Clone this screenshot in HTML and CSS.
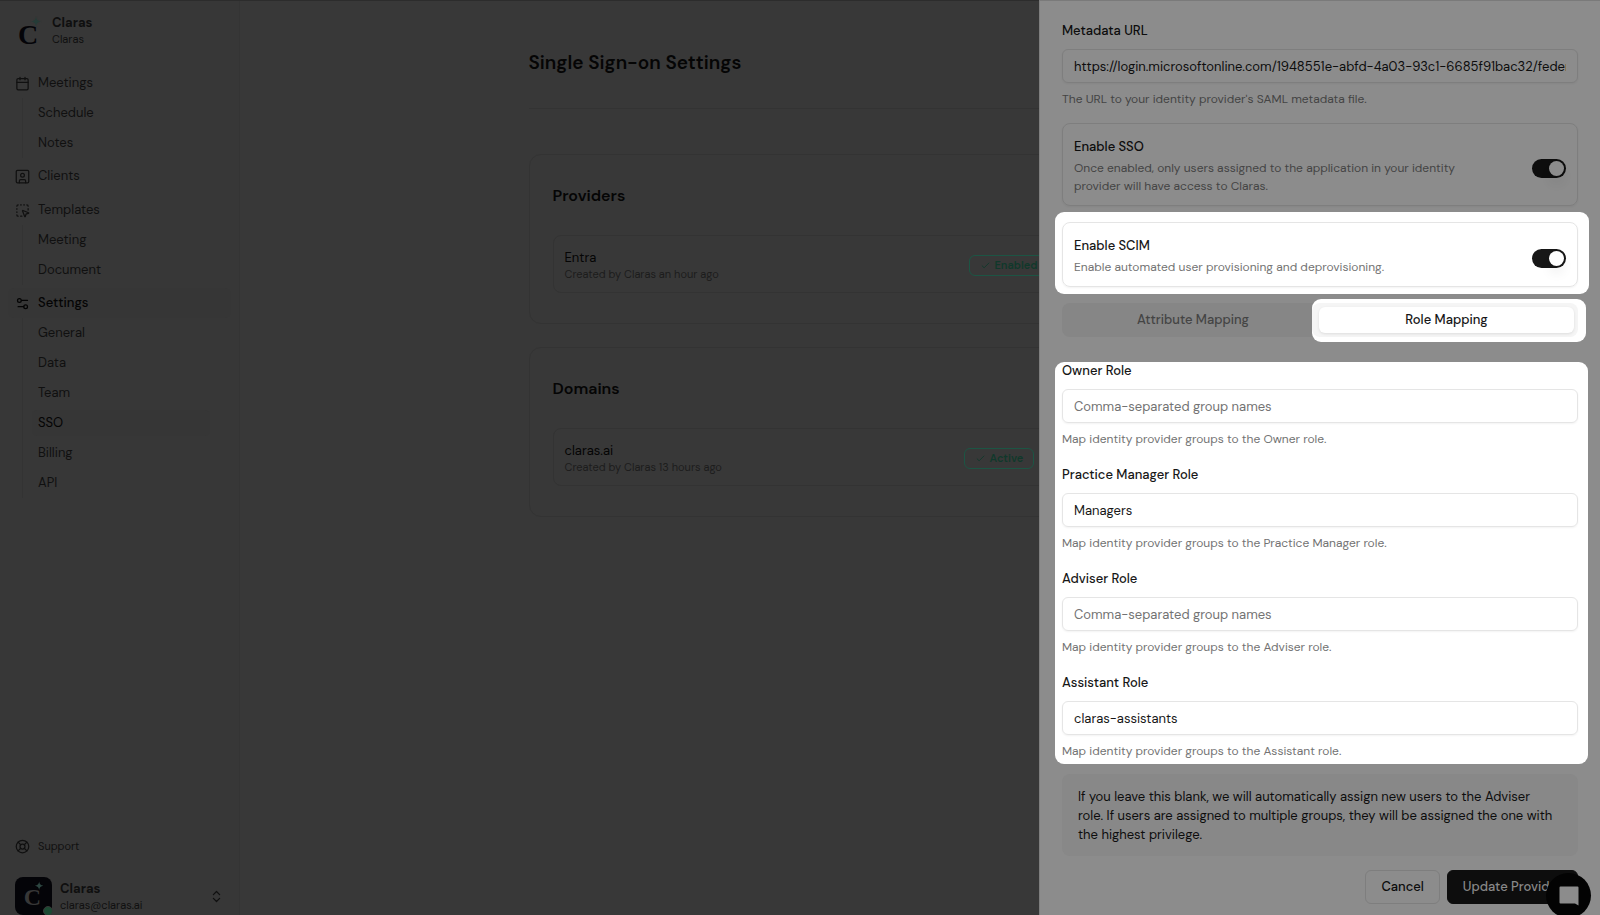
FILE: index.html
```html
<!DOCTYPE html>
<html lang="en">
<head>
    <meta charset="UTF-8">
    <meta name="viewport" content="width=device-width, initial-scale=1.0">
    <title>Claras - Single Sign-on Settings</title>
    <link rel="stylesheet" href="styles.css">
</head>
<body>
    <div class="app">
        <!-- Sidebar -->
        <aside class="sidebar">
            <div class="brand">
                <svg class="brand-logo" viewBox="0 0 28 36" aria-hidden="true">
                    <text x="2" y="28" class="logo-letter">C</text>
                    <path class="logo-star" d="M20 0.500Q20.500 5 25 5.500Q20.500 6 20 10.500Q19.500 6 15 5.500Q19.500 5 20 0.500Z"/>
                </svg>
                <div>
                    <div class="brand-name">Claras</div>
                    <div class="brand-sub">Claras</div>
                </div>
            </div>

            <nav class="nav">
                <a class="nav-item" href="#">
                    <svg class="icon" viewBox="0 0 24 24"><path d="M8 2v4M16 2v4M3 10h18"/><rect x="3" y="4" width="18" height="18" rx="2"/></svg>
                    Meetings
                </a>
                <div class="nav-sub">
                    <a href="#">Schedule</a>
                    <a href="#">Notes</a>
                </div>
                <a class="nav-item" href="#">
                    <svg class="icon" viewBox="0 0 24 24"><rect x="2" y="2" width="20" height="20" rx="2"/><circle cx="12" cy="10" r="3"/><path d="M7 22v-3a2 2 0 0 1 2-2h6a2 2 0 0 1 2 2v3"/></svg>
                    Clients
                </a>
                <a class="nav-item" href="#">
                    <svg class="icon" viewBox="0 0 24 24"><path d="M12.034 12.681a.498.498 0 0 1 .647-.647l9 3.500a.5.500 0 0 1-.033.943l-3.444 1.068a1 1 0 0 0-.66.660l-1.067 3.443a.5.500 0 0 1-.943.033zM5 3a2 2 0 0 0-2 2M19 3a2 2 0 0 1 2 2M5 21a2 2 0 0 1-2-2M9 3h1M9 21h2M14 3h1M3 9v1M21 9v2M3 14v1"/></svg>
                    Templates
                </a>
                <div class="nav-sub">
                    <a href="#">Meeting</a>
                    <a href="#">Document</a>
                </div>
                <a class="nav-item active" href="#">
                    <svg class="icon" viewBox="0 0 24 24"><path d="M20 7h-9M14 17H5"/><circle cx="17" cy="17" r="3"/><circle cx="7" cy="7" r="3"/></svg>
                    Settings
                </a>
                <div class="nav-sub">
                    <a href="#">General</a>
                    <a href="#">Data</a>
                    <a href="#">Team</a>
                    <a class="active" href="#">SSO</a>
                    <a href="#">Billing</a>
                    <a href="#">API</a>
                </div>
            </nav>

            <a class="support" href="#">
                <svg class="icon" viewBox="0 0 24 24"><circle cx="12" cy="12" r="10"/><circle cx="12" cy="12" r="4"/><path d="m4.930 4.930 4.240 4.240M14.830 9.170l4.240-4.240M14.830 14.830l4.240 4.240M9.170 14.830l-4.240 4.240"/></svg>
                Support
            </a>

            <button class="account" type="button">
                <span class="avatar">
                    <svg class="avatar-logo" viewBox="0 0 28 36" aria-hidden="true">
                        <text x="2" y="28" class="logo-letter">C</text>
                        <path class="logo-star" d="M20 0.500Q20.500 5 25 5.500Q20.500 6 20 10.500Q19.500 6 15 5.500Q19.500 5 20 0.500Z"/>
                    </svg>
                    <span class="status-dot"></span>
                </span>
                <span class="account-text">
                    <span class="brand-name">Claras</span>
                    <span class="brand-sub">claras@claras.ai</span>
                </span>
                <svg class="icon" viewBox="0 0 24 24"><path d="m7 15 5 5 5-5M7 9l5-5 5 5"/></svg>
            </button>
        </aside>

        <!-- Page content -->
        <main class="main">
            <div class="content">
                <h1>Single Sign-on Settings</h1>

                <section class="card">
                    <h2>Providers</h2>
                    <div class="row">
                        <div>
                            <div class="row-title">Entra</div>
                            <div class="row-meta">Created by Claras an hour ago</div>
                        </div>
                        <div class="row-actions provider-actions">
                            <span class="badge"><svg class="check" viewBox="0 0 24 24"><path d="M20 6 9 17l-5-5"/></svg>Enabled</span>
                        </div>
                    </div>
                </section>

                <section class="card">
                    <h2>Domains</h2>
                    <div class="row">
                        <div>
                            <div class="row-title">claras.ai</div>
                            <div class="row-meta">Created by Claras 13 hours ago</div>
                        </div>
                        <div class="row-actions domain-actions">
                            <span class="badge"><svg class="check" viewBox="0 0 24 24"><path d="M20 6 9 17l-5-5"/></svg>Active</span>
                        </div>
                    </div>
                </section>
            </div>
        </main>
    </div>

    <!-- Edit provider panel -->
    <form class="panel">
        <div class="field">
            <label for="metadataUrl">Metadata URL</label>
            <input id="metadataUrl" type="text" value="https://login.microsoftonline.com/1948551e-abfd-4a03-93c1-6685f91bac32/federationmetadata/2007-06/federationmetadata.xml">
            <p class="help">The URL to your identity provider's SAML metadata file.</p>
        </div>

        <div class="switch-card">
            <div class="switch-text">
                <label for="enableSso">Enable SSO</label>
                <p class="help">Once enabled, only users assigned to the application in your identity provider will have access to Claras.</p>
            </div>
            <input id="enableSso" class="switch" type="checkbox" checked>
        </div>

        <div class="spotlight spotlight-scim">
            <div class="switch-card">
                <div class="switch-text">
                    <label for="enableScim">Enable SCIM</label>
                    <p class="help">Enable automated user provisioning and deprovisioning.</p>
                </div>
                <input id="enableScim" class="switch" type="checkbox" checked>
            </div>
        </div>

        <div class="tabs">
            <button class="tab" type="button">Attribute Mapping</button>
            <div class="spotlight spotlight-tab">
                <div class="tab-track">
                    <button class="tab active" type="button">Role Mapping</button>
                </div>
            </div>
        </div>

        <div class="spotlight spotlight-roles">
            <div class="field">
                <label for="ownerRole">Owner Role</label>
                <input id="ownerRole" type="text" placeholder="Comma-separated group names">
                <p class="help">Map identity provider groups to the Owner role.</p>
            </div>
            <div class="field">
                <label for="managerRole">Practice Manager Role</label>
                <input id="managerRole" type="text" value="Managers">
                <p class="help">Map identity provider groups to the Practice Manager role.</p>
            </div>
            <div class="field">
                <label for="adviserRole">Adviser Role</label>
                <input id="adviserRole" type="text" placeholder="Comma-separated group names">
                <p class="help">Map identity provider groups to the Adviser role.</p>
            </div>
            <div class="field">
                <label for="assistantRole">Assistant Role</label>
                <input id="assistantRole" type="text" value="claras-assistants">
                <p class="help">Map identity provider groups to the Assistant role.</p>
            </div>
        </div>

        <p class="notice">If you leave this blank, we will automatically assign new users to the Adviser role. If users are assigned to multiple groups, they will be assigned the one with the highest privilege.</p>

        <div class="panel-actions">
            <button class="btn" type="button">Cancel</button>
            <button class="btn btn-primary" type="submit">Update Provider</button>
        </div>
    </form>

    <button class="chat" type="button" aria-label="Open chat">
        <svg viewBox="0 0 20 20"><path d="M1.500 0.500h17a1 1 0 0 1 1 1v18l-3.500-2H1.500a1 1 0 0 1-1-1v-15a1 1 0 0 1 1-1z"/></svg>
    </button>
</body>
</html>
```

FILE: styles.css
```css
* {
    box-sizing: border-box;
}

body {
    margin: 0;
    height: 100vh;
    overflow: hidden;
    font-family: "DM Sans", Inter, "Open Sans", sans-serif;
    font-size: 13px;
    line-height: 18px;
    color: #050505;
    background-color: #383838;
    border-top: 1px solid #2c2c2c;
}

h1, h2, p {
    margin: 0;
}

a {
    color: inherit;
    text-decoration: none;
}

button, input {
    font: inherit;
    color: inherit;
}

.app {
    display: flex;
    height: 100%;
}

/* Sidebar */
.sidebar {
    display: flex;
    flex-direction: column;
    width: 240px;
    padding: 13px 8px 0;
    background-color: #373737;
    border-right: 1px solid #343434;
    color: #101010;
}

.brand {
    display: flex;
    gap: 8px;
    height: 54px;
    padding-left: 8px;
}

.brand-logo {
    width: 28px;
    height: 36px;
    margin-top: 2px;
}

.logo-letter {
    font-family: "Liberation Serif", serif;
    font-size: 28px;
    font-weight: bold;
    fill: #040408;
}

.logo-star {
    fill: #263b37;
    stroke: #373737;
    stroke-width: 2;
    paint-order: stroke;
}

.brand-name {
    font-size: 13px;
    line-height: 18px;
    font-weight: 700;
    color: #0f0f0f;
}

.brand-sub {
    font-size: 11px;
    line-height: 14px;
}

.icon {
    width: 15px;
    height: 15px;
    flex: none;
    fill: none;
    stroke: currentColor;
    stroke-width: 2;
    stroke-linecap: round;
    stroke-linejoin: round;
}

.nav {
    display: flex;
    flex-direction: column;
}

.nav-item {
    display: flex;
    align-items: center;
    gap: 8px;
    height: 30px;
    margin-bottom: 4px;
    padding: 0 7px;
    border-radius: 6px;
}

.nav-item.active {
    background-color: #363636;
    color: #040404;
    font-weight: 500;
}

.nav-sub {
    display: flex;
    flex-direction: column;
    gap: 4px;
    margin: -4px 21px 3px 14px;
    padding: 2px 0 2px 9px;
    border-left: 1px solid #333333;
}

.nav-sub a {
    height: 26px;
    padding: 4px 6px;
    border-radius: 5px;
}

.nav-sub a.active {
    background-color: #363636;
    color: #040404;
}

.support {
    display: flex;
    align-items: center;
    gap: 8px;
    height: 30px;
    margin-top: auto;
    padding: 0 7px;
    font-size: 11px;
}

.account {
    display: flex;
    align-items: center;
    gap: 8px;
    margin-top: 16px;
    padding: 0 7px;
    border: none;
    background: none;
    text-align: left;
}

.avatar {
    position: relative;
    display: flex;
    align-items: center;
    justify-content: center;
    width: 37px;
    height: 38px;
    border-radius: 8px;
    background-color: #040408;
}

.avatar-logo {
    width: 24px;
    height: 31px;
}

.avatar .logo-letter {
    fill: #373737;
}

.avatar .logo-star {
    fill: #2d4641;
    stroke: #040408;
}

.status-dot {
    position: absolute;
    right: -1px;
    bottom: -1px;
    width: 10px;
    height: 10px;
    border: 1px solid #373737;
    border-radius: 50%;
    background-color: #1c4a33;
}

.account-text {
    display: flex;
    flex-direction: column;
    flex: 1;
}

/* Page content */
.main {
    flex: 1;
    padding: 50px 24px 0;
}

.content {
    max-width: 783px;
    margin: 0 auto;
}

h1 {
    height: 58px;
    border-bottom: 1px solid #333333;
    font-size: 19px;
    line-height: 24px;
    font-weight: 600;
}

.card {
    margin-top: 45px;
    padding: 29px 23px 30px;
    border: 1px solid #333333;
    border-radius: 12px;
}

.card + .card {
    margin-top: 23px;
}

h2 {
    margin-bottom: 27px;
    font-size: 16px;
    line-height: 24px;
    font-weight: 600;
}

.row {
    display: flex;
    align-items: center;
    justify-content: space-between;
    height: 58px;
    padding: 2px 11px 0;
    border: 1px solid #333333;
    border-radius: 8px;
}

.row-title {
    line-height: 17px;
}

.row-meta {
    font-size: 11px;
    line-height: 16px;
    color: #1c1c1c;
}

.provider-actions {
    width: 307px;
}

.domain-actions {
    width: 312px;
}

.row-actions {
    display: flex;
}

.badge {
    display: flex;
    align-items: center;
    gap: 4px;
    height: 21px;
    padding: 0 10px;
    border: 1px solid #1c5544;
    border-radius: 6px;
    font-size: 11px;
    font-weight: 600;
    color: #10382b;
}

.check {
    width: 11px;
    height: 11px;
    fill: none;
    stroke: currentColor;
    stroke-width: 2;
}

/* Provider panel, slides over the page */
.panel {
    position: absolute;
    top: 0;
    right: 0;
    bottom: 0;
    width: 561px;
    padding: 21px 22px 0;
    overflow: hidden;
    background-color: #8c8c8c;
    border-top: 1px solid #7a7a7a;
    border-left: 1px solid #7e7e7e;
    color: #0d0d0d;
}

.field {
    display: flex;
    flex-direction: column;
}

.panel label {
    font-weight: 500;
}

.field input {
    width: 100%;
    height: 34px;
    margin: 9px 0 7px;
    padding: 0 11px;
    border: 1px solid #7e7e7e;
    border-radius: 6px;
    background-color: transparent;
    box-shadow: 0 1px 2px rgba(0, 0, 0, 0.05);
    outline: none;
}

.field input::placeholder {
    color: #737373;
    opacity: 1;
}

.help {
    font-size: 12px;
    color: #444444;
}

.switch-card {
    display: flex;
    align-items: center;
    justify-content: space-between;
    margin-top: 15px;
    padding: 14px 11px 10px;
    border: 1px solid #7e7e7e;
    border-radius: 8px;
    box-shadow: 0 1px 2px rgba(0, 0, 0, 0.05);
}

.switch-text {
    max-width: 400px;
}

.switch-text .help {
    margin-top: 3px;
}

.switch {
    appearance: none;
    width: 34px;
    height: 19px;
    margin: 4px 0 0;
    padding: 2px;
    border-radius: 10px;
    background-color: #0d0d0d;
}

.switch::before {
    content: "";
    display: block;
    width: 15px;
    height: 15px;
    margin-left: 15px;
    border-radius: 50%;
    background-color: #8c8c8c;
    box-shadow: 0 8px 12px rgba(0, 0, 0, 0.06);
}

/* Highlighted parts of the panel */
.spotlight {
    background-color: #ffffff;
    border-radius: 9px;
    color: #171717;
}

.spotlight .help {
    color: #737373;
}

.spotlight .field input,
.spotlight .switch-card {
    border-color: #e5e5e5;
}

.spotlight .switch {
    background-color: #171717;
}

.spotlight .switch::before {
    background-color: #ffffff;
}

.spotlight-scim {
    margin: 6px -11px 0 -7px;
    padding: 10px 11px 7px 7px;
}

.spotlight-scim .switch-card {
    margin-top: 0;
}

.tabs {
    display: flex;
    height: 34px;
    margin-top: 9px;
    border-radius: 8px;
    background-color: #868686;
}

.tab {
    flex: 1;
    padding: 0 0 0 12px;
    border: none;
    border-radius: 6px;
    background: none;
    color: #444444;
    font-weight: 500;
}

.spotlight-tab {
    width: 274px;
    margin: -4px -8px -5px 0;
    padding: 4px 8px 5px 0;
}

.tab-track {
    display: flex;
    height: 34px;
    padding: 4px 4px 4px 7px;
    border-radius: 8px;
    background-color: #f5f5f5;
}

.tab.active {
    padding: 0;
    background-color: #ffffff;
    color: #171717;
    box-shadow: 0 1px 3px rgba(0, 0, 0, 0.1);
}

.spotlight-roles {
    display: flex;
    flex-direction: column;
    gap: 18px;
    margin: 25px -10px 0 -7px;
    padding: 0 10px 4px 7px;
}

.notice {
    margin-top: 10px;
    padding: 13px 20px 12px 16px;
    border-radius: 8px;
    background-color: #888888;
    line-height: 19px;
}

.panel-actions {
    display: flex;
    justify-content: flex-end;
    gap: 7px;
    margin-top: 14px;
}

.btn {
    height: 34px;
    padding: 0 15px;
    border: 1px solid #7e7e7e;
    border-radius: 6px;
    background: none;
    font-weight: 500;
}

.btn-primary {
    border-color: #0d0d0d;
    background-color: #0d0d0d;
    color: #888888;
}

/* Chat launcher */
.chat {
    position: absolute;
    right: 9px;
    bottom: -3px;
    display: flex;
    align-items: center;
    justify-content: center;
    width: 45px;
    height: 45px;
    padding: 0;
    border: none;
    border-radius: 50%;
    background-color: #030303;
}

.chat svg {
    width: 20px;
    height: 20px;
    fill: #8c8c8c;
}
```
